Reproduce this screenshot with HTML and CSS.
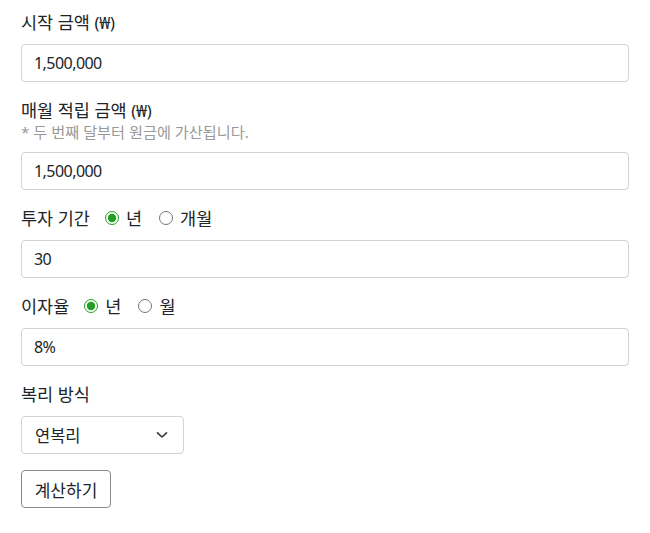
FILE: index.html
```html
<!DOCTYPE html>
<html lang="ko">
<head>
<meta charset="utf-8">
<link rel="stylesheet" href="styles.css">
</head>
<body>
<form class="form">
  <div class="field">
    <div class="label">시작 금액 <span class="cur">(₩)</span></div>
    <input class="input" type="text" value="1,500,000">
  </div>
  <div class="field">
    <div class="label-group">
      <div class="label tight">매월 적립 금액 <span class="cur">(₩)</span></div>
      <div class="hint">* 두 번째 달부터 원금에 가산됩니다.</div>
    </div>
    <input class="input" type="text" value="1,500,000">
  </div>
  <div class="field">
    <div class="label row">
      <span class="title">투자 기간</span>
      <label class="opt"><input type="radio" name="p" checked><span>년</span></label>
      <label class="opt"><input type="radio" name="p"><span>개월</span></label>
    </div>
    <input class="input" type="text" value="30">
  </div>
  <div class="field">
    <div class="label row">
      <span class="title">이자율</span>
      <label class="opt"><input type="radio" name="r" checked><span>년</span></label>
      <label class="opt"><input type="radio" name="r"><span>월</span></label>
    </div>
    <input class="input" type="text" value="8%">
  </div>
  <div class="field">
    <div class="label">복리 방식</div>
    <div class="select-wrap">
      <select class="select"><option>연복리</option><option>월복리</option></select>
      <svg class="chev" width="12" height="8" viewBox="0 0 12 8"><path d="M1.5 1.8 L6 6 L10.5 1.8" fill="none" stroke="#343a40" stroke-width="1.6" stroke-linecap="round" stroke-linejoin="round"/></svg>
    </div>
  </div>
  <button type="button" class="btn">계산하기</button>
</form>
</body>
</html>
```
FILE: styles.css
```css
html, body {
  margin: 0;
  background: #fff;
}
body {
  font-family: "Noto Sans", "Noto Sans CJK KR", sans-serif;
  color: #212529;
  font-size: 16px;
}
.form {
  padding: 10px 21px 20px 21px;
  display: flex;
  flex-direction: column;
  align-items: flex-start;
}
.field {
  width: 100%;
  margin-bottom: 16px;
}
.label {
  font-size: 17.5px;
  line-height: 24px;
  height: 24px;
  margin-bottom: 10px;
  white-space: nowrap;
}
.cur {
  font-size: 16.5px;
  letter-spacing: -0.3px;
}
.label.tight {
  margin-bottom: 0;
}
.label-group {
  margin-bottom: 10px;
}
.hint {
  font-size: 15.2px;
  line-height: 20px;
  color: #999;
}
.row {
  display: flex;
  align-items: center;
}
.title {
  margin-right: 15px;
}
.opt {
  display: flex;
  align-items: center;
  margin-right: 17px;
}
.opt input {
  margin: 0 7px 0 0;
  width: 14px;
  height: 14px;
  accent-color: #22a022;
}
.input {
  box-sizing: border-box;
  display: block;
  width: 100%;
  height: 38px;
  border: 1px solid #ced4da;
  border-radius: 4px;
  padding: 0 12px;
  font-family: "Noto Sans", "Noto Sans CJK KR", sans-serif;
  font-size: 16px;
  letter-spacing: -0.55px;
  color: #212529;
  background: #fff;
}
.select-wrap {
  position: relative;
  width: 163px;
}
.select {
  box-sizing: border-box;
  appearance: none;
  -webkit-appearance: none;
  width: 163px;
  height: 38px;
  border: 1px solid #ced4da;
  border-radius: 4px;
  padding: 0 13px;
  font-family: "Noto Sans", "Noto Sans CJK KR", sans-serif;
  font-size: 16.5px;
  color: #212529;
  background: #fff;
}
.chev {
  position: absolute;
  right: 16px;
  top: 15px;
  pointer-events: none;
}
.btn {
  box-sizing: border-box;
  height: 38px;
  width: 90px;
  border: 1px solid #8a8a8a;
  border-radius: 4px;
  background: #fff;
  font-family: "Noto Sans", "Noto Sans CJK KR", sans-serif;
  font-size: 17px;
  color: #212529;
  padding: 0;
}
```
